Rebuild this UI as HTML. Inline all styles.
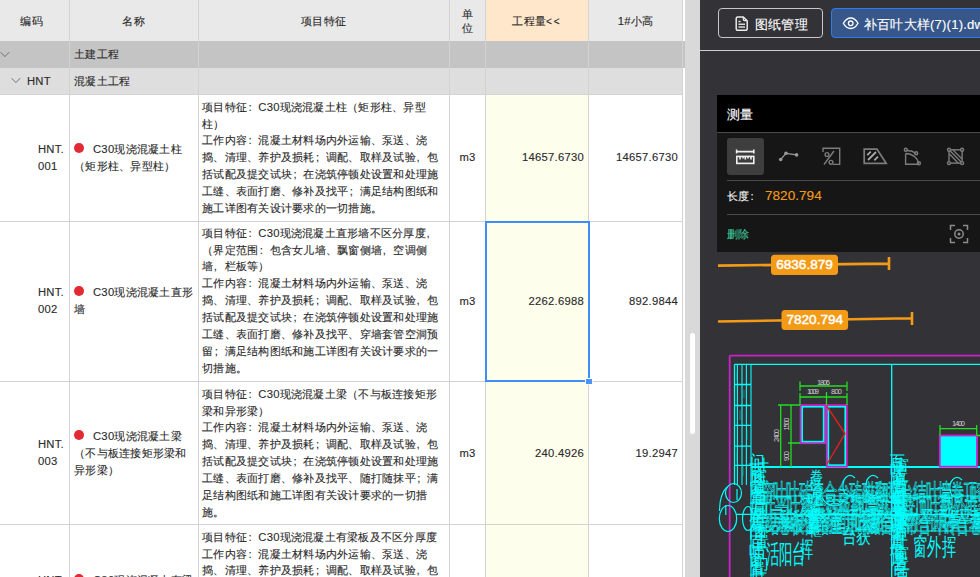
<!DOCTYPE html>
<html><head><meta charset="utf-8">
<style>
*{box-sizing:border-box;margin:0;padding:0}
html,body{width:980px;height:577px;overflow:hidden;background:#fff}
body{position:relative;font-family:"Liberation Sans",sans-serif;font-size:11.25px;color:#2a2a2a;-webkit-text-stroke-width:0.12px;line-height:16.875px}
.a{position:absolute;white-space:nowrap}
.vl{position:absolute;width:1px;background:#d3d3d3}
.hl{position:absolute;height:1px;background:#d3d3d3}
.c3{position:absolute;left:202px;white-space:nowrap;line-height:16.875px}
.num{position:absolute;text-align:right;white-space:nowrap}
.pc{padding-left:1.6px;letter-spacing:6.55px}
.pm{padding-left:0.6px;letter-spacing:7.55px}
.dot{position:absolute;width:10px;height:10.2px;border-radius:50%;background:#e32934}
</style></head><body>
<!-- table backgrounds -->
<div class="a" style="left:0;top:0;width:682px;height:41px;background:#e9e9e9"></div>
<div class="a" style="left:486px;top:0;width:102px;height:41px;background:#fee7cb"></div>
<div class="a" style="left:0;top:41px;width:685px;height:27px;background:#c4c4c4"></div>
<div class="a" style="left:0;top:68px;width:682px;height:26px;background:#dedede"></div>
<div class="a" style="left:486px;top:95px;width:102px;height:482px;background:#fefeed"></div>
<!-- grid lines -->
<div class="vl" style="left:69px;top:0;height:577px"></div>
<div class="vl" style="left:198px;top:0;height:577px"></div>
<div class="vl" style="left:449px;top:0;height:577px"></div>
<div class="vl" style="left:485px;top:0;height:577px"></div>
<div class="vl" style="left:588px;top:0;height:577px"></div>
<div class="vl" style="left:682px;top:0;height:577px"></div>
<div class="hl" style="left:0;top:94px;width:683px"></div>
<div class="hl" style="left:0;top:221px;width:683px"></div>
<div class="hl" style="left:0;top:381px;width:683px"></div>
<div class="hl" style="left:0;top:524px;width:683px"></div>
<div class="a" style="left:0;top:1px;width:683px;height:576px;letter-spacing:0.25px">
<!-- header text -->
<div class="a" style="left:0;width:63px;top:12px;text-align:center">编码</div>
<div class="a" style="left:70px;width:127px;top:12px;text-align:center">名称</div>
<div class="a" style="left:198px;width:251px;top:12px;text-align:center">项目特征</div>
<div class="a" style="left:450px;width:35px;top:5.5px;text-align:center;line-height:14.3px">单<br>位</div>
<div class="a" style="left:486px;width:102px;top:12px;text-align:center">工程量<span style="letter-spacing:2px;font-size:10px">&lt;&lt;</span></div>
<div class="a" style="left:589px;width:93px;top:12px;text-align:center">1#小高</div>
<!-- group rows -->
<svg class="a" style="left:0;top:48px" width="12" height="10" viewBox="0 0 12 10"><path d="M0.6 3.2L4.9 7.6L9.2 3.2" fill="none" stroke="#707070" stroke-width="1"/></svg>
<div class="a" style="left:74px;top:45px">土建工程</div>
<svg class="a" style="left:11px;top:74px" width="12" height="10" viewBox="0 0 12 10"><path d="M0.6 3.2L4.9 7.6L9.2 3.2" fill="none" stroke="#707070" stroke-width="1"/></svg>
<div class="a" style="left:27px;top:72px">HNT</div>
<div class="a" style="left:74px;top:72px">混凝土工程</div>
<!-- row 1 -->
<div class="a" style="left:38px;top:140px">HNT.<br>001</div>
<div class="dot" style="left:74px;top:142px"></div>
<div class="a" style="left:93px;top:140px">C30现浇混凝土柱</div>
<div class="a" style="left:74px;top:157px">（矩形柱、异型柱）</div>
<div class="c3" style="top:97.7px">项目特征<span class="pc">:</span>C30现浇混凝土柱（矩形柱、异型<br>柱）<br>工作内容<span class="pc">:</span>混凝土材料场内外运输、泵送、浇<br>捣、清理、养护及损耗<span class="pc">;</span>调配、取样及试验<span class="pm">,</span>包<br>括试配及提交试块<span class="pc">;</span>在浇筑停顿处设置和处理施<br>工缝、表面打磨、修补及找平<span class="pc">;</span>满足结构图纸和<br>施工详图有关设计要求的一切措施。</div>
<div class="a" style="left:450px;width:35px;top:148px;text-align:center">m3</div>
<div class="num" style="left:486px;width:98px;top:148px">14657.6730</div>
<div class="num" style="left:589px;width:89px;top:148px">14657.6730</div>
<!-- row 2 -->
<div class="a" style="left:38px;top:283px">HNT.<br>002</div>
<div class="dot" style="left:74px;top:285px"></div>
<div class="a" style="left:93px;top:283px">C30现浇混凝土直形</div>
<div class="a" style="left:74px;top:300px">墙</div>
<div class="c3" style="top:223.7px">项目特征<span class="pc">:</span>C30现浇混凝土直形墙不区分厚度<span class="pm">,</span><br>（界定范围<span class="pc">:</span>包含女儿墙、飘窗侧墙<span class="pm">,</span>空调侧<br>墙<span class="pm">,</span>栏板等）<br>工作内容<span class="pc">:</span>混凝土材料场内外运输、泵送、浇<br>捣、清理、养护及损耗<span class="pc">;</span>调配、取样及试验<span class="pm">,</span>包<br>括试配及提交试块<span class="pc">;</span>在浇筑停顿处设置和处理施<br>工缝、表面打磨、修补及找平、穿墙套管空洞预<br>留<span class="pc">;</span>满足结构图纸和施工详图有关设计要求的一<br>切措施。</div>
<div class="a" style="left:450px;width:35px;top:292px;text-align:center">m3</div>
<div class="num" style="left:486px;width:98px;top:292px">2262.6988</div>
<div class="num" style="left:589px;width:89px;top:292px">892.9844</div>
<!-- row 3 -->
<div class="a" style="left:38px;top:435px">HNT.<br>003</div>
<div class="dot" style="left:74px;top:429px"></div>
<div class="a" style="left:93px;top:427px">C30现浇混凝土梁</div>
<div class="a" style="left:74px;top:444px">（不与板连接矩形梁和<br>异形梁）</div>
<div class="c3" style="top:384.7px">项目特征<span class="pc">:</span>C30现浇混凝土梁（不与板连接矩形<br>梁和异形梁）<br>工作内容<span class="pc">:</span>混凝土材料场内外运输、泵送、浇<br>捣、清理、养护及损耗<span class="pc">;</span>调配、取样及试验<span class="pm">,</span>包<br>括试配及提交试块<span class="pc">;</span>在浇筑停顿处设置和处理施<br>工缝、表面打磨、修补及找平、随打随抹平<span class="pc">;</span>满<br>足结构图纸和施工详图有关设计要求的一切措<br>施。</div>
<div class="a" style="left:450px;width:35px;top:444px;text-align:center">m3</div>
<div class="num" style="left:486px;width:98px;top:444px">240.4926</div>
<div class="num" style="left:589px;width:89px;top:444px">19.2947</div>
<!-- row 4 -->
<div class="a" style="left:38px;top:571px">HNT.</div>
<div class="dot" style="left:74px;top:573px"></div>
<div class="a" style="left:93px;top:571px">C30现浇混凝土有梁</div>
<div class="c3" style="top:527.7px">项目特征<span class="pc">:</span>C30现浇混凝土有梁板及不区分厚度<br>工作内容<span class="pc">:</span>混凝土材料场内外运输、泵送、浇<br>捣、清理、养护及损耗<span class="pc">;</span>调配、取样及试验<span class="pm">,</span>包</div>
</div>
<!-- selection -->
<div class="a" style="left:485px;top:221px;width:105px;height:161px;border:2px solid #3d8ef8"></div>
<div class="a" style="left:585px;top:378px;width:8px;height:7px;background:#4a95f6;border:1px solid #fff"></div>
<!-- scrollbar -->
<div class="a" style="left:685px;top:0;width:15px;height:577px;background:#d9d9d9"></div>
<div class="a" style="left:690px;top:333px;width:5px;height:101px;background:#fff;border-radius:2.5px"></div>
<!-- right panel -->
<div id="rp" class="a" style="left:700px;top:0;width:280px;height:577px;background:#333337;overflow:hidden"></div>
<!-- toolbar -->
<div class="a" style="left:718px;top:8px;width:105px;height:30px;border:1px solid #c9c9c9;border-radius:4px"></div>
<svg class="a" style="left:730px;top:12px" width="22" height="24" viewBox="730 12 22 24"><path d="M738.3 16.9H743.2L747.2 20.9V28.8A1.5 1.5 0 0 1 745.7 30.3H737.7A1.5 1.5 0 0 1 736.2 28.8V18.4A1.5 1.5 0 0 1 737.7 16.9Z" fill="none" stroke="#ececec" stroke-width="1.5"/><path d="M743.3 17.3V19.4A1.2 1.2 0 0 0 744.5 20.6H746.8" fill="none" stroke="#ececec" stroke-width="1.2"/><path d="M738.4 21.5H740.6M738.4 24.3H745M738.4 27H745" stroke="#d8d8d8" stroke-width="1.5"/></svg>
<div class="a" style="left:755px;top:15.7px;font-size:13.1px;line-height:18px;color:#fff;letter-spacing:0.2px">图纸管理</div>
<div class="a" style="left:831px;top:8px;width:170px;height:30px;background:#37578a;border:1.5px solid #2b7cf3;border-radius:4px"></div>
<svg class="a" style="left:838px;top:12px" width="24" height="24" viewBox="838 12 24 24"><path d="M843.4 23.3C845.3 19.8 847.8 18 850.7 18S856.1 19.8 858 23.3C856.1 26.8 853.6 28.5 850.7 28.5S845.3 26.8 843.4 23.3Z" fill="none" stroke="#fff" stroke-width="1.35"/><circle cx="850.7" cy="23.3" r="2.3" fill="none" stroke="#fff" stroke-width="1.3"/></svg>
<div class="a" style="left:864px;top:15.7px;font-size:13.1px;line-height:18px;color:#fff;letter-spacing:0.2px">补百叶大样(7)(1).dwg</div>
<div class="a" style="left:700px;top:50px;width:280px;height:1px;background:#cfcfcf"></div>
<!-- measure panel -->
<div class="a" style="left:717px;top:95px;width:263px;height:37px;background:#000"></div>
<div class="a" style="left:717px;top:132px;width:263px;height:120px;background:#161616"></div>
<div class="a" style="left:717px;top:132px;width:263px;height:1px;background:#4a4a4a"></div>
<div class="a" style="left:727px;top:105.5px;font-size:13.1px;line-height:18px;color:#fff;letter-spacing:0.2px">测量</div>
<div class="a" style="left:727px;top:138px;width:37px;height:37px;background:#3e3e3e;border-radius:3px"></div>
<svg class="a" style="left:717px;top:132px" width="263" height="50" viewBox="717 132 263 50">
 <g fill="none" stroke="#f0f0f0" stroke-width="1.6">
  <path d="M736 151.6h18.4M736.6 149.6v4M753.8 149.6v4"/>
  <rect x="736.8" y="156.4" width="17" height="7" />
  <path d="M740 156.4v3M743 156.4v2M745.3 156.4v3M748 156.4v2M751 156.4v3"/>
 </g>
 <g fill="#9a9a9a" stroke="#9a9a9a" stroke-width="1.2">
  <path d="M780.7 159.5L786 153.3L796.6 154.9" fill="none"/>
  <circle cx="780.7" cy="159.5" r="1.8" stroke="none"/><circle cx="786" cy="153.3" r="1.8" stroke="none"/><circle cx="796.6" cy="154.9" r="1.8" stroke="none"/>
 </g>
 <g fill="none" stroke="#7c7c7c" stroke-width="1.4">
  <path d="M823 152V148.3H839.7V164.4H833"/>
  <circle cx="827" cy="154.5" r="1.9"/><circle cx="831" cy="162.3" r="1.9"/><path d="M834 151L824 164.5"/>
  <path d="M864.2 149.2H877L886.2 163.3H864.2Z" stroke-width="1.7"/>
  <path d="M867.2 155.2L870.8 151.6M868 160L876 152M874.3 160.3L878 156.6" stroke="#a8a8a8" stroke-width="1.8"/>
  <path d="M905.6 153.5V164.3H918.5M905.6 153.5A13 11 0 0 1 918.5 164.3"/>
  <path d="M906.6 150.5A14 14 0 0 1 916 153.5"/>
  <circle cx="905.8" cy="149.8" r="1.5"/><circle cx="916.2" cy="153.2" r="1.5"/><circle cx="918.9" cy="163.3" r="1.5"/>
  <rect x="949" y="149.8" width="13.1" height="13.3"/>
  <path d="M949 149.8L962.1 163.1M953 150L962 159M949.5 154L958 163"/>
  <circle cx="949" cy="149.8" r="1.5" fill="#161616"/><circle cx="962.1" cy="149.8" r="1.5" fill="#161616"/><circle cx="949" cy="163.1" r="1.5" fill="#161616"/><circle cx="962.1" cy="163.1" r="1.5" fill="#161616"/>
 </g>
</svg>
<div class="a" style="left:727px;top:180px;width:253px;height:1px;background:#4a4a4a"></div>
<div class="a" style="left:727px;top:188px;font-size:11.25px;line-height:17px;color:#eee">长度<span class="pc">:</span></div>
<div class="a" style="left:765px;top:187px;font-size:13.6px;line-height:18px;color:#f39b17">7820.794</div>
<div class="a" style="left:727px;top:214px;width:253px;height:1px;background:#4a4a4a"></div>
<div class="a" style="left:727px;top:226px;font-size:11.25px;line-height:17px;color:#3cc59a">删除</div>
<svg class="a" style="left:948px;top:223px" width="22" height="22" viewBox="0 0 22 22"><g fill="none" stroke="#8c8c8c" stroke-width="1.5"><path d="M2.5 7V2.5H7M15 2.5H19.5V7M19.5 15V19.5H15M7 19.5H2.5V15"/><circle cx="11" cy="11" r="4.2"/></g><circle cx="11" cy="11" r="1.5" fill="#8c8c8c"/></svg>
<!-- CAD -->
<svg class="a" style="left:700px;top:340px" width="280" height="237" viewBox="700 340 280 237">
 <g fill="none" stroke="#00ffff" stroke-width="1.3">
  <path d="M734.5 364.3H980M734.5 364.3V485M891.7 364.3V577"/>
  <path d="M737.4 364.3V485M742 364.3V485M746.4 364.3V485M751 364.3V577" stroke-width="1.1"/>
  <path d="M734.5 384.5H751M734.5 405.5H751M734.5 425.3H751M734.5 446.2H751M734.5 465.4H751"/>
  <path d="M751.5 467H980" stroke-width="1.8"/>
  <path d="M751 496H980M736 514.3H980M751 531H980" stroke-width="1.2"/>
 </g>
 <g fill="none" stroke="#00cccc" stroke-width="0.8" opacity="0.7">
  <path d="M737 372V380M744 390V398M740 410V420M747 430V440M737 452V462M743 466V476"/>
 </g>
 <g fill="none" stroke="#cc22cc" stroke-width="1.8">
  <path d="M729.7 355.6H980M729.7 355.6V577"/>
  <rect x="800.6" y="405.2" width="24.6" height="38"/>
  <rect x="826.8" y="405.2" width="20" height="61.5"/>
  <rect x="939.8" y="435.5" width="37.2" height="31.2" fill="#00ffff"/>
 </g>
 <g fill="none" stroke="#00ffff" stroke-width="1.6">
  <rect x="802.2" y="406.8" width="21.4" height="34.8"/>
  <rect x="828.4" y="406.8" width="16.8" height="58.3"/>
 </g>
 <path d="M827 406.5L845 433.5L827 464" fill="none" stroke="#e02020" stroke-width="1.4"/>
 <g fill="none" stroke="#22dd22" stroke-width="1.3">
  <path d="M800 386H847M800 381.5V391M847 381.5V391"/>
  <path d="M800 397H847M800 393V405M826.5 392V405M847 393V405"/>
  <path d="M778 405H800M780.7 405V467M791 405V467M788 443H800"/>
  <path d="M940 428.6H977M940 425V435.5M976.7 425V435.5M977 435.5H980"/>
 </g>
 <g fill="#cfcfcf" font-size="7.5px" font-family="Liberation Sans Narrow, Liberation Sans, sans-serif">
  <text x="817" y="385" textLength="13">1806</text>
  <text x="807" y="394" textLength="12">1009</text>
  <text x="831" y="394" textLength="11">800</text>
  <text x="952" y="426" textLength="13">1400</text>
  <text transform="translate(778.5 442) rotate(-90)" textLength="13">2400</text>
  <text transform="translate(789 430.5) rotate(-90)" textLength="13">1500</text>
  <text transform="translate(789 461) rotate(-90)" textLength="10">900</text>
 </g>
 <g fill="none" stroke="#00ffff" stroke-width="1.2">
  <ellipse cx="733.5" cy="493" rx="8" ry="9.5"/>
  <path d="M727 487C722 492 719.5 502 719.5 511M725.8 505V515M737 489V500"/>
  <ellipse cx="728" cy="518.5" rx="8.7" ry="13"/>
  <ellipse cx="748" cy="518.5" rx="5.5" ry="12"/>
  <path d="M878 478c-6-6-13 0-12 10c1 8 9 10 12 4"/>
  <path d="M962 480c-6-6-13 0-12 10c1 8 9 10 12 4"/>
  <path d="M855 478c-6-6-13 0-12 10c1 8 9 10 12 4"/>
  <path d="M822 497c4 10 16 12 22 4"/>
 </g>
 <g fill="#00ffff" font-size="15px"><text x="749.8" y="466.0">门</text><text x="749.4" y="475.0">百</text><text x="750.6" y="484.0">叶</text><text x="749.2" y="493.0">窗</text><text x="750.3" y="502.0">置</text><text x="749.9" y="511.0">墙</text><text x="749.1" y="520.0">厚</text><text x="750.3" y="529.0">置</text><text x="749.1" y="538.0">门</text><text x="750.1" y="547.0">百</text><text x="749.2" y="556.0">叶</text><text x="749.2" y="565.0">窗</text><text x="750.1" y="574.0">置</text><text x="753.6" y="470.0">叶</text><text x="751.8" y="481.0">窗</text><text x="752.1" y="492.0">置</text><text x="753.1" y="503.0">百</text><text x="753.9" y="514.0">门</text><text x="752.9" y="525.0">叶</text><text x="752.5" y="536.0">窗</text><text x="753.9" y="547.0">置</text><text x="751.6" y="558.0">百</text><text x="753.6" y="569.0">门</text><text x="752.2" y="580.0">叶</text><text x="890.4" y="466.0">百</text><text x="890.3" y="475.0">叶</text><text x="890.8" y="484.0">窗</text><text x="892.0" y="493.0">置</text><text x="890.5" y="502.0">墙</text><text x="891.5" y="511.0">厚</text><text x="891.6" y="520.0">百</text><text x="890.9" y="529.0">叶</text><text x="891.4" y="538.0">窗</text><text x="890.2" y="547.0">置</text><text x="890.1" y="556.0">墙</text><text x="890.5" y="565.0">厚</text><text x="891.7" y="574.0">百</text><text x="893.6" y="470.0">窗</text><text x="893.3" y="481.0">置</text><text x="894.0" y="492.0">百</text><text x="893.6" y="503.0">叶</text><text x="893.2" y="514.0">窗</text><text x="894.5" y="525.0">置</text><text x="894.2" y="536.0">百</text><text x="893.1" y="547.0">叶</text><text x="893.9" y="558.0">窗</text><text x="893.8" y="569.0">置</text><text x="894.7" y="580.0">百</text></g>
 <g fill="#00ffff" font-size="13px"><text x="809.8" y="480.0">卷</text><text x="808.7" y="488.0">框</text><text x="810.5" y="496.0">台</text><text x="808.3" y="504.0">叶</text><text x="809.0" y="512.0">窗</text><text x="809.9" y="520.0">墙</text><text x="808.4" y="528.0">卷</text><text x="809.2" y="536.0">框</text></g>
 <g fill="none" stroke="#00ffff" stroke-width="0.6"><text transform="translate(760.5 500.0) scale(0.72 1.25)" font-size="18px">帘叶叶砖漆合台砖磁翻型台结叶墙卷顶帘</text><text transform="translate(762.0 514.0) scale(0.72 1.25)" font-size="18px">叶平叶漆合砖板翻墙磁屋获顶叶翻外框帘</text><text transform="translate(756.0 527.0) scale(0.72 1.25)" font-size="18px">合厉磁移窗移框顶漆翻合获外平顶墙平屋</text><text transform="translate(765.6 532.0) scale(0.72 1.25)" font-size="18px">结卷板窗结屋厉叶磁台获帘合叶砖合卷框</text></g>
 <g fill="#00ffff"><text transform="translate(766.0 563.0) scale(0.70 1.35)" font-size="19px">活阳台</text><text transform="translate(800.0 557.0) scale(0.75 1.30)" font-size="18px">挥</text><text transform="translate(842.0 543.0) scale(0.85 1.15)" font-size="17px">台获</text><text transform="translate(913.0 555.0) scale(0.80 1.35)" font-size="18px">窗外挥</text></g>
</svg>
<!-- orange measure lines -->
<svg class="a" style="left:700px;top:250px" width="280" height="90" viewBox="700 250 280 90">
 <g stroke="#f39b17" stroke-width="2.6" fill="none">
  <path d="M718 265.6L889 263.6M889 257V270"/>
  <path d="M718 321.5L912 318.2M912 312V325"/>
 </g>
 <rect x="771" y="254.7" width="67" height="20.3" rx="3.5" fill="#f39b17"/>
 <rect x="781.5" y="310" width="66.6" height="20" rx="3.5" fill="#f39b17"/>
</svg>
<div class="a" style="left:771px;top:256px;width:67px;text-align:center;font-size:13.6px;line-height:18px;color:#fff;-webkit-text-stroke-width:0.45px">6836.879</div>
<div class="a" style="left:781.5px;top:311px;width:66.6px;text-align:center;font-size:13.6px;line-height:18px;color:#fff;-webkit-text-stroke-width:0.45px">7820.794</div>

</body></html>
